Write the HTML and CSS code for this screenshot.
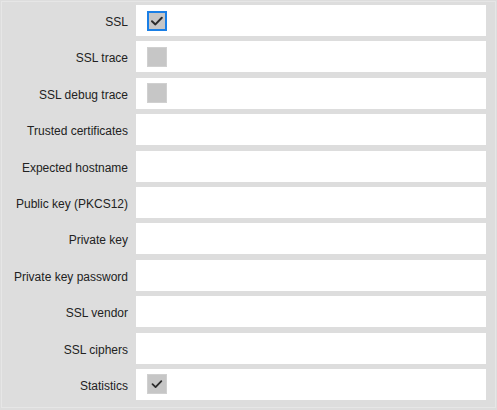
FILE: index.html
```html
<!DOCTYPE html>
<html lang="en">
<head>
    <meta charset="UTF-8">
    <title>SSL settings</title>
    <link rel="stylesheet" href="styles.css">
</head>
<body>
    <div class="panel">
        <div class="row">
            <label class="label">SSL</label>
            <div class="field"><span class="check checked focused"><svg viewBox="0 0 20 20"><path d="M5 10.2 L8.4 13.4 L14.8 6.8"/></svg></span></div>
        </div>
        <div class="row">
            <label class="label">SSL trace</label>
            <div class="field"><span class="check"></span></div>
        </div>
        <div class="row">
            <label class="label">SSL debug trace</label>
            <div class="field"><span class="check"></span></div>
        </div>
        <div class="row">
            <label class="label">Trusted certificates</label>
            <div class="field"></div>
        </div>
        <div class="row">
            <label class="label">Expected hostname</label>
            <div class="field"></div>
        </div>
        <div class="row">
            <label class="label">Public key (PKCS12)</label>
            <div class="field"></div>
        </div>
        <div class="row">
            <label class="label">Private key</label>
            <div class="field"></div>
        </div>
        <div class="row">
            <label class="label">Private key password</label>
            <div class="field"></div>
        </div>
        <div class="row">
            <label class="label">SSL vendor</label>
            <div class="field"></div>
        </div>
        <div class="row">
            <label class="label">SSL ciphers</label>
            <div class="field"></div>
        </div>
        <div class="row">
            <label class="label">Statistics</label>
            <div class="field"><span class="check checked"><svg viewBox="0 0 20 20"><path d="M5 10.2 L8.4 13.4 L14.8 6.8"/></svg></span></div>
        </div>
    </div>
</body>
</html>
```

FILE: styles.css
```css
body {
    margin: 0;
    background-color: #dddddd;
    font-family: "Liberation Sans", Arial, sans-serif;
    font-size: 12px;
    color: #222;
}
.panel {
    margin: 1px;
    width: 493px;
    border: 1px solid #e6e6e6;
    padding: 3px 9px 7px 0;
    box-sizing: content-box;
    width: 484px;
    display: flex;
    flex-direction: column;
    gap: 5.4px;
}
.row {
    display: flex;
    height: 31px;
}
.label {
    width: 134px;
    flex-shrink: 0;
    box-sizing: border-box;
    padding: 3px 8px 0 0;
    text-align: right;
    display: flex;
    align-items: center;
    justify-content: flex-end;
}
.field {
    flex: 1;
    background: #fff;
    display: flex;
    align-items: center;
    padding-left: 11px;
}
.check {
    width: 20px;
    height: 20px;
    box-sizing: border-box;
    background: #c6c6c6;
    border: 1px solid #d0d0d0;
    display: block;
}
.check.focused {
    border: 2px solid #1a7fe6;
}
.check svg {
    display: block;
    width: 100%;
    height: 100%;
}
.check.focused svg {
    margin: -2px;
    width: 20px;
    height: 20px;
}
.check path {
    fill: none;
    stroke: #2b2b2b;
    stroke-width: 2;
    stroke-linecap: round;
    stroke-linejoin: round;
}
```
